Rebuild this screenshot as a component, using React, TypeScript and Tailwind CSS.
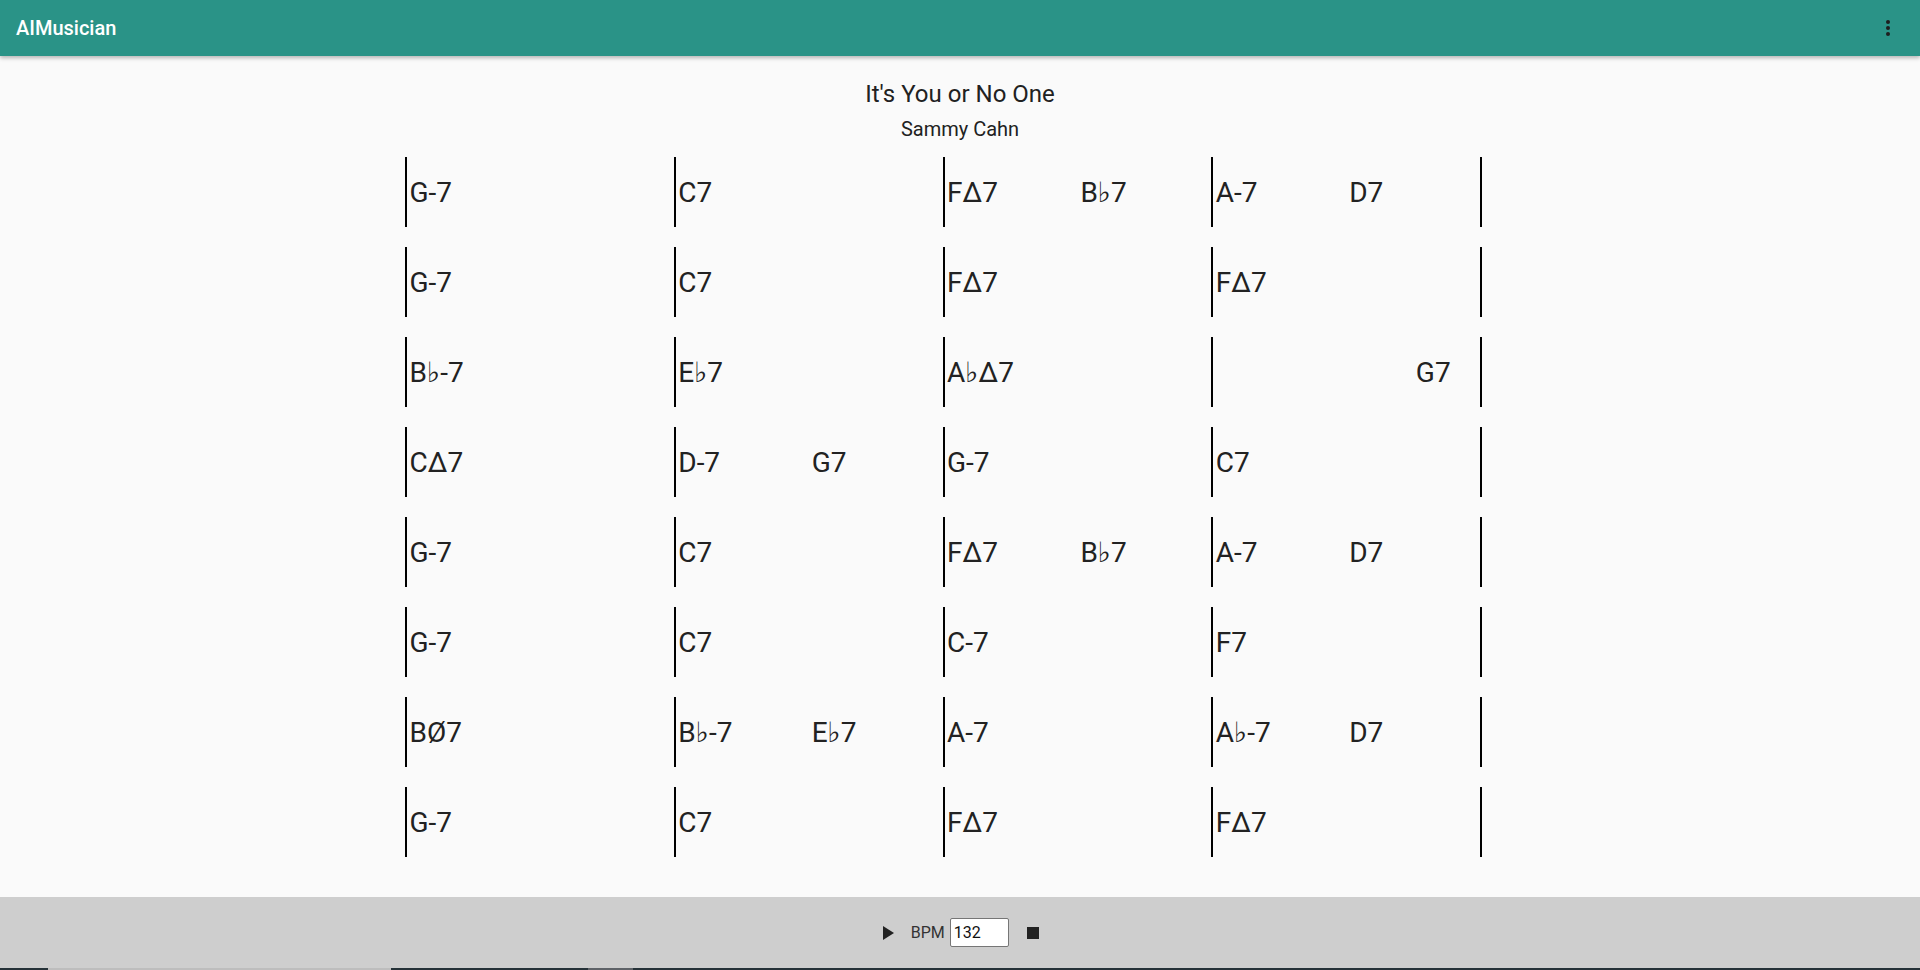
import React from "react";

type Measure = string[];

const rows: Measure[][] = [
  [["G-7"], ["C7"], ["F\u03947", "", "B\u266d7"], ["A-7", "", "D7"]],
  [["G-7"], ["C7"], ["F\u03947"], ["F\u03947"]],
  [["B\u266d-7"], ["E\u266d7"], ["A\u266d\u03947"], ["", "", "", "G7"]],
  [["C\u03947"], ["D-7", "", "G7"], ["G-7"], ["C7"]],
  [["G-7"], ["C7"], ["F\u03947", "", "B\u266d7"], ["A-7", "", "D7"]],
  [["G-7"], ["C7"], ["C-7"], ["F7"]],
  [["B\u00d87"], ["B\u266d-7", "", "E\u266d7"], ["A-7"], ["A\u266d-7", "", "D7"]],
  [["G-7"], ["C7"], ["F\u03947"], ["F\u03947"]],
];

function MeasureCell({ beats }: { beats: Measure }) {
  const slots = [0, 1, 2, 3].map((i) => beats[i] ?? "");
  return (
    <div className="w-[268.75px] h-[70px] border-l-2 border-black grid grid-cols-4 items-center pt-[2px]">
      {slots.map((c, i) => (
        <span key={i} className="whitespace-nowrap pl-[2.5px] text-[28px] leading-none text-[#222]">
          {c}
        </span>
      ))}
    </div>
  );
}

export default function App() {
  return (
    <div
      className="w-full h-[970px] flex flex-col bg-[#fafafa] overflow-hidden"
      style={{ fontFamily: "Roboto, 'DejaVu Sans', sans-serif" }}
    >
      <header className="relative z-10 h-14 shrink-0 bg-[#2a9387] flex items-center justify-between pl-4 pr-5 shadow-[0_2px_4px_rgba(0,0,0,0.28)]">
        <span className="text-white text-[20px] font-medium leading-none">AIMusician</span>
        <svg width="24" height="24" viewBox="0 0 24 24" className="fill-[#1e1e1e]">
          <circle cx="12" cy="6" r="2" />
          <circle cx="12" cy="12" r="2" />
          <circle cx="12" cy="18" r="2" />
        </svg>
      </header>

      <main className="flex-1 flex flex-col items-center pt-[22px]">
        <h1 className="text-[24px] leading-[32px] text-[#212121] font-normal">It's You or No One</h1>
        <h2 className="mt-[5px] text-[20px] leading-[28px] text-[#212121] font-normal">Sammy Cahn</h2>
        <div className="w-[1110px] mt-[13.5px] flex flex-col gap-[20px]">
          {rows.map((row, r) => (
            <div key={r} className="flex">
              {row.map((m, i) => (
                <MeasureCell key={i} beats={m} />
              ))}
              <div className="w-[2px] h-[70px] bg-black" />
            </div>
          ))}
        </div>
      </main>

      <footer className="h-[71px] shrink-0 bg-[#cecece] flex items-center justify-center">
        <svg width="24" height="24" viewBox="0 0 24 24" className="fill-[#222]">
          <path d="M8 5v14l11-7z" />
        </svg>
        <span className="ml-[12px] text-[16px] text-[#333] leading-none">BPM</span>
        <input
          readOnly
          value="132"
          className="ml-[5px] w-[59px] h-[29px] bg-white border border-[#767676] rounded-[2px] px-[3px] text-[16px] text-[#111] outline-none"
          style={{ fontFamily: "Roboto, sans-serif" }}
        />
        <svg width="24" height="24" viewBox="0 0 24 24" className="ml-[12.5px] fill-[#222]">
          <path d="M6 6h12v12H6z" />
        </svg>
      </footer>

      <div className="h-[2px] shrink-0 flex">
        <div className="w-[48px] bg-[#263238]" />
        <div className="w-[343px] bg-[#bdbdbd]" />
        <div className="w-[197px] bg-[#263238]" />
        <div className="w-[45px] bg-[#5f6368]" />
        <div className="flex-1 bg-[#263238]" />
      </div>
    </div>
  );
}
